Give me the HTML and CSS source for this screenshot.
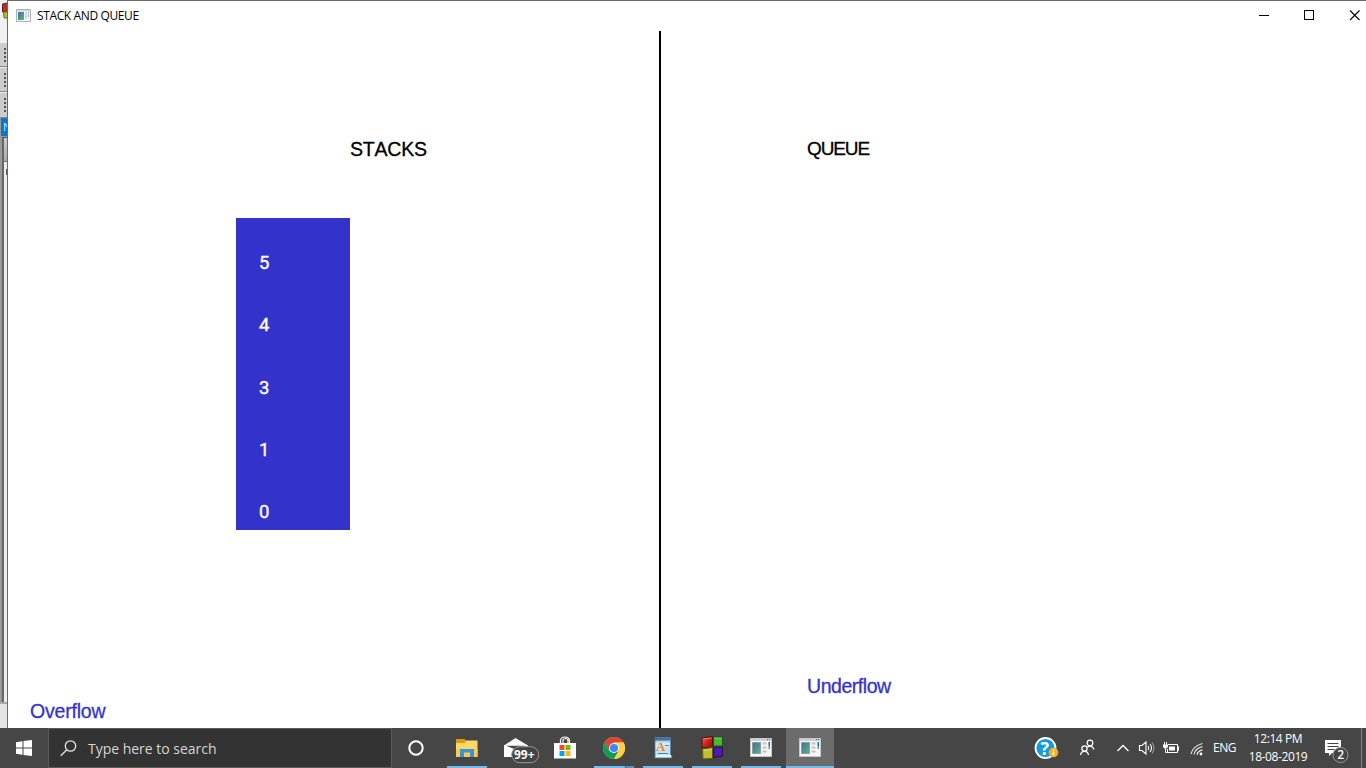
FILE: index.html
```html
<!DOCTYPE html>
<html lang="en">
<head>
<meta charset="utf-8">
<title>STACK AND QUEUE</title>
<link rel="stylesheet" href="styles.css">
</head>
<body>
<svg class="defs" aria-hidden="true">
  <defs>
    <linearGradient id="teal" x1="0" y1="0" x2="1" y2="1"><stop offset="0" stop-color="#446da0"/><stop offset="1" stop-color="#58b580"/></linearGradient>
    <linearGradient id="red" x1="0" y1="0" x2="1" y2="1"><stop offset="0" stop-color="#f06a5c"/><stop offset=".5" stop-color="#ce2218"/><stop offset="1" stop-color="#8b0c08"/></linearGradient>
    <linearGradient id="paper" x1="0" y1="0" x2="0" y2="1"><stop offset="0" stop-color="#68a3cf"/><stop offset=".3" stop-color="#d4ebf8"/><stop offset="1" stop-color="#b4d8ef"/></linearGradient>
    <symbol id="app" viewBox="0 0 22 19">
      <path fill="#f5f5f5" stroke="#c5c9cb" d="M.5.5h21v18H.5z"/>
      <path fill="#cbd0d6" d="M1 1h20v2H1z"/>
      <path fill="#4d6d91" d="M17 1h1v1h-1zM19 1h1v1h-1z"/>
      <path fill="url(#teal)" stroke="#8b9ca1" d="M2.500 4.500h8v11h-8z"/>
      <path stroke="#c4c4c4" stroke-width="2" d="M12.500 5.500h4M12.500 9.500h4M12.500 13.500h4"/>
      <path fill="#286796" d="M18.500 4H20v4h-1.500z"/><path fill="#50ad79" d="M18.500 8H20v3h-1.500z"/>
    </symbol>
  </defs>
</svg>
<main class="desktop">
  <aside class="behind">
    <div class="behind-top"><svg width="7" height="42"><path fill="#ba2c22" stroke="#5d2820" d="M2.500 4l5-1v9h-5z"/><path fill="#bcbc25" stroke="#777022" d="M3.500 12H8v6H4z"/></svg></div>
    <div class="grip"><i></i></div><div class="grip"><i></i></div><div class="grip last"><i></i></div>
    <div class="behind-title">N</div>
    <div class="behind-tab"></div>
    <div class="behind-page"><i></i></div>
    <div class="behind-foot"></div>
  </aside>
  <section class="window">
    <header class="titlebar">
      <svg class="title-icon" width="15" height="13" viewBox="0 0 15 13"><path fill="#f4f4f4" stroke="#a9b3bb" d="M.5.5h14v12H.5z"/><path fill="#d4dbe0" d="M1 1h13v1.500H1z"/><path fill="url(#teal)" d="M2 3h6v8H2z"/><path fill="#d4dbe0" d="M9 3h2v7H9z"/><path fill="#a5c5c0" d="M12 3h1v5h-1z"/></svg>
      <span class="title">STACK AND QUEUE</span>
      <svg class="controls" width="110" height="30" shape-rendering="crispEdges"><path fill="none" stroke="#000" d="M3 14.500h10M48.500 9.500h9v9h-9z"/><path shape-rendering="geometricPrecision" stroke="#000" stroke-width="1.100" d="M94 9.500l9.500 9.500M103.500 9.500L94 19"/></svg>
    </header>
    <div class="canvas">
      <div class="pane stacks">
        <h1 class="label">STACKS</h1>
        <ol class="stack"><li>5</li><li>4</li><li>3</li><li>1</li><li>0</li></ol>
        <p class="label status">Overflow</p>
      </div>
      <div class="pane queue">
        <h1 class="label">QUEUE</h1>
        <p class="label status">Underflow</p>
      </div>
    </div>
  </section>
</main>
<footer class="taskbar">
  <div class="start"><svg width="16" height="16"><path fill="#fff" d="M0 2.200L6.500 1.300V7.500H0zM7.500 1.100L16 0v7.500H7.500zM0 8.500h6.500v6.200L0 13.800zM7.500 8.500H16V16l-8.500-1.100z"/></svg></div>
  <div class="search">
    <svg width="17" height="17"><g fill="none" stroke="#e6e6e6" stroke-width="1.300"><circle cx="10.500" cy="6" r="5.200"/><path d="M6.800 9.700L.8 15.800"/></g></svg>
    <span>Type here to search</span>
  </div>
  <nav class="apps">
    <div class="app cortana"><svg width="18" height="18"><circle cx="9" cy="9" r="6.700" fill="none" stroke="#fff" stroke-width="2"/></svg></div>
    <div class="app open"><svg width="22" height="20"><path fill="#d99b0a" d="M0 1h8.500l1.500 1.500V6H0z"/><path fill="#ffd869" d="M10 2.500h11.500V19H0V5h8.500z"/><path fill="#f9cb55" d="M0 11h21.500v8H0z"/><path fill="#3b94da" d="M4 11h14v8h-4v-4.500H8V19H4z"/></svg></div>
    <div class="app"><svg class="mail" width="38" height="24"><path fill="#fff" d="M1 8.500L12.500 1 25 8.500V20H1z"/><path fill="#454545" d="M3 8.700h20L13.500 13z"/><rect x="8.700" y="9.700" width="27" height="16" rx="8" fill="#444" stroke="#999"/><text x="11" y="22" class="mail-count">99+</text></svg></div>
    <div class="app"><svg width="24" height="24"><path fill="#fff" d="M1 7h22v15.500H1z"/><path fill="none" stroke="#fff" stroke-width="1.200" d="M7.500 7V4.500Q8 1 12 1t4.500 3.500V7M10 7V4q2.500-3 5 0v3"/><path fill="#f25022" d="M6.500 9h5v5h-5z"/><path fill="#7fba00" d="M12.500 9h5v5h-5z"/><path fill="#00a4ef" d="M6.500 15h5v5h-5z"/><path fill="#ffb900" d="M12.500 15h5v5h-5z"/></svg></div>
    <div class="app open multi"><svg width="22" height="22" viewBox="0 0 22 22"><circle cx="11" cy="11" r="11" fill="#ffd044"/><path fill="#db4437" d="M1.470 5.500A11 11 0 0 1 20.530 5.500H11L6.200 13.700z"/><path fill="#109d59" d="M1.470 5.500A11 11 0 0 0 11 22L15.800 13.700H6.200z"/><path fill="#ffd044" d="M11 22A11 11 0 0 0 20.530 5.500H11l4.800 8.200z"/><circle cx="11" cy="11" r="5.100" fill="#f4f5f2"/><circle cx="11" cy="11" r="4.100" fill="#4285f4"/></svg></div>
    <div class="app open"><svg width="20" height="22"><path fill="url(#paper)" stroke="#527da0" stroke-width=".7" d="M2 .5h15.500v18h1.200v2.500H3q-2 0-1-2z"/><path fill="#3f729c" d="M2 1h15.500v2.500H2z"/><text x="3" y="14" class="wordpad-a">A</text><path stroke="#4b88b8" d="M12 8.500h4M5 16.500h10"/><path fill="#e9f6ff" d="M3 18h15v2H3z"/></svg></div>
    <div class="app open"><svg width="23" height="24"><path fill="url(#red)" stroke="#4b1512" d="M1 2L11.500.5v10.500L1 12z"/><path fill="#47b92c" stroke="#225318" d="M12.500 1h9v9h-9z"/><path fill="#c3be2e" stroke="#62601d" d="M1.500 13l10-1.500v10.800L2 23z"/><path fill="#5018b6" stroke="#241044" d="M12.500 11.500l9-.5v9l-9 1.500z"/><path stroke="#fff" stroke-opacity=".35" d="M2 3l8.500-1M13 2h7.500M2.500 14.500l8-1"/></svg></div>
    <div class="app open"><svg class="app-window" width="22" height="19"><use href="#app"/></svg></div>
    <div class="app open active"><svg class="app-window" width="22" height="19"><use href="#app"/></svg></div>
  </nav>
  <div class="tray">
    <svg width="28" height="24"><circle cx="11.500" cy="12" r="10" fill="#159bda" stroke="#fff" stroke-width="1.800"/><text x="6.500" y="18.500" class="help-q">?</text><circle cx="19.500" cy="16.500" r="4.800" fill="#f6ad24"/><path stroke="#fff" stroke-width="1.600" d="M19.500 13v1.500M19.500 15.500v4"/></svg>
    <svg class="people" width="20" height="18" fill="none" stroke="#fff" stroke-width="1.250"><circle cx="12" cy="4" r="2.800"/><circle cx="6.500" cy="9.500" r="2.600"/><path d="M2.500 16q.5-3.700 4-3.700t4 3.700M9.500 8q4.500-2.500 6.500 2.500"/></svg>
    <svg class="chevron" width="14" height="10" fill="none" stroke="#fff" stroke-width="1.300"><path d="M1.500 8L7 2.500 12.500 8"/></svg>
    <svg class="volume" width="18" height="16" fill="none" stroke="#fff" stroke-width="1.100"><path d="M1.500 5.500h2.500l4-3.500v12l-4-3.500H1.500zM10 6q1.500 2 0 4M12 4q3 4 0 8"/><path stroke="#999" d="M14 2.500q4 5.500 0 11"/></svg>
    <svg class="battery" width="18" height="14" fill="none" stroke="#fff"><path d="M6 3.500h9.500v8h-10V8M15.500 5.500h1v4h-1M2.500 1v3M4.500 1v3M3.500 7v4.500h2"/><path fill="#fff" stroke="none" d="M1 3.500h5V6L4.500 7.500h-2L1 6zM7 5.500h6v4H7z"/></svg>
    <svg class="wifi" width="14" height="14" fill="none" stroke="#e4e4e4" stroke-width="1.200"><path d="M1 12Q3 4 12.500 1.500M4 12.500Q5 6.500 12.500 4.700M7 12.800Q7.500 9 12.500 7.800"/><circle cx="11" cy="12" r="1.400" fill="#fff" stroke="none"/></svg>
    <span class="lang">ENG</span>
    <div class="clock"><span>12:14 PM</span><span>18-08-2019</span></div>
    <svg class="notes" width="26" height="24"><path fill="#fff" d="M1 0h16v13H8l-3 3v-3H1z"/><path stroke="#444" d="M3.500 3.500h11M3.500 6.500h11M3.500 9.500h7"/><circle cx="16.500" cy="15" r="7.500" fill="#444" stroke="#999"/><text x="13.200" y="19.200" class="note-count">2</text></svg>
  </div>
  <div class="show-desktop"></div>
</footer>
</body>
</html>
```
FILE: styles.css
```css
* { box-sizing: border-box; }
body {
  margin: 0;
  width: 1366px;
  height: 768px;
  overflow: hidden;
  display: flex;
  flex-direction: column;
  background: #fff;
  font-family: "Open Sans", "Noto Sans", sans-serif;
}
svg { display: block; flex: none; overflow: visible; }
.defs { position: absolute; width: 0; height: 0; }
.desktop { display: flex; height: 728px; }

.behind { width: 8px; border-right: 1px solid #6b6b6b; overflow: hidden; background: #999; }
.behind-top { height: 42px; background: #f0f0f0; }
.behind-top svg { overflow: hidden; }
.grip { height: 25px; padding: 5px 0 0 4px; background: #ccc; border-top: 1px solid #eee; border-bottom: 1px solid #888; }
.grip.last { height: 26px; }
.grip i { display: block; width: 2px; height: 15px; background: repeating-linear-gradient(#555 0 2px, #ccc 2px 4px); }
.behind-title { height: 18px; margin-left: 1px; padding-left: 2px; background: #0878d0; color: #d4eafa; font-size: 11px; line-height: 18px; }
.behind-tab { height: 24px; margin: 1px 0 0 2px; border-left: 2px solid #666; border-top: 1px solid #555; background: linear-gradient(#ccc, #aaa); }
.behind-page { height: 541px; margin-left: 2px; padding-top: 7px; border-left: 2px solid #666; border-top: 1px solid #777; background: #eee; }
.behind-page i { display: block; width: 1px; height: 6px; margin-left: 2px; background: #556; }
.behind-foot { height: 26px; border-top: 2px solid #aaa; background: #e4e4e4; }

.window { flex: 1; display: flex; flex-direction: column; border-top: 1px solid #6b6b6b; background: #fff; }
.titlebar { height: 30px; display: flex; align-items: center; padding-left: 8px; }
.title-icon { margin-top: -2px; }
.title { margin: -1px 0 0 6px; font-size: 12px; line-height: 16px; letter-spacing: -0.38px; white-space: nowrap; color: #000; }
.controls { margin-left: auto; }
.canvas { height: 697px; display: flex; font-family: "Liberation Sans", Arial, sans-serif; }
.pane { display: flex; flex-direction: column; align-items: flex-start; padding-top: 108px; }
.stacks { width: 653px; border-right: 2px solid #000; padding-left: 22px; }
.queue { flex: 1; padding-left: 146px; }
.label { margin: 0; font-size: 19.500px; font-weight: 400; line-height: 20px; letter-spacing: -0.2px; color: #000; font-kerning: none; -webkit-text-stroke: 0.3px currentColor; }
.stacks h1 { margin-left: 320px; }
.queue h1 { font-size: 19px; letter-spacing: -1.1px; }
.status { color: #3333cc; margin-top: auto; }
.stacks .status { margin-bottom: 7px; }
.queue .status { margin-bottom: 32px; letter-spacing: -0.45px; }
.stack { width: 114px; height: 312px; margin: 59px 0 0 206px; padding: 0 0 0 23px; list-style: none; background: #3333cc; color: #fff; display: grid; grid-template-rows: repeat(5, 1fr); font-family: Roboto, "Liberation Sans", sans-serif; font-size: 18.500px; line-height: 20px; -webkit-text-stroke: 0.35px currentColor; }
.stack li { align-self: end; padding-bottom: 7.600px; }

.taskbar { height: 40px; display: flex; background: #464646; color: #fff; }
.start { width: 48px; display: flex; align-items: center; justify-content: center; }
.search { width: 344px; display: flex; align-items: center; gap: 11px; padding-left: 11px; background: #333; border: 1px solid #5b5b5b; color: #d6d6d6; font-size: 14px; letter-spacing: -0.02px; white-space: nowrap; }
.apps { display: flex; gap: 1px; }
.app { width: 48px; height: 40px; display: flex; align-items: center; justify-content: center; }
.cortana { margin-right: 2px; }
.open { background: linear-gradient(#76b9ed, #76b9ed) center bottom / 40px 2px no-repeat; }
.multi { background: linear-gradient(90deg, #76b9ed 31px, #3d607a 31px 32px, #5b8fb5 32px) center bottom / 40px 2px no-repeat; }
.active { background-color: #6c6c6c; background-size: 48px 2px; }
.app-window { margin: -1px 1px 0 0; }
.mail { margin: 1px 0 0 11px; }
.mail-count { font: 700 12px "Open Sans", sans-serif; fill: #fff; }
.wordpad-a { font: 700 13px "Liberation Serif", serif; fill: #f58220; }
.help-q { font: 700 18px "Open Sans", sans-serif; fill: #fff; }
.tray { margin-left: auto; display: flex; align-items: center; }
.people { margin-left: 16px; }
.chevron { margin-left: 18px; }
.volume { margin-left: 8px; }
.battery { margin-left: 6px; }
.wifi { margin: 2px 0 0 10px; }
.lang { width: 24px; margin: -1px 0 0 9px; font-size: 12px; letter-spacing: -0.5px; }
.clock { width: 60px; margin: 0 0 0 11px; display: flex; flex-direction: column; align-items: center; font-size: 12px; line-height: 18px; letter-spacing: -0.4px; white-space: nowrap; }
.notes { margin: 8px 11px 0 16px; }
.note-count { font: 600 12px "Open Sans", sans-serif; fill: #fff; }
.show-desktop { width: 5px; border-left: 1px solid #858585; }
```
